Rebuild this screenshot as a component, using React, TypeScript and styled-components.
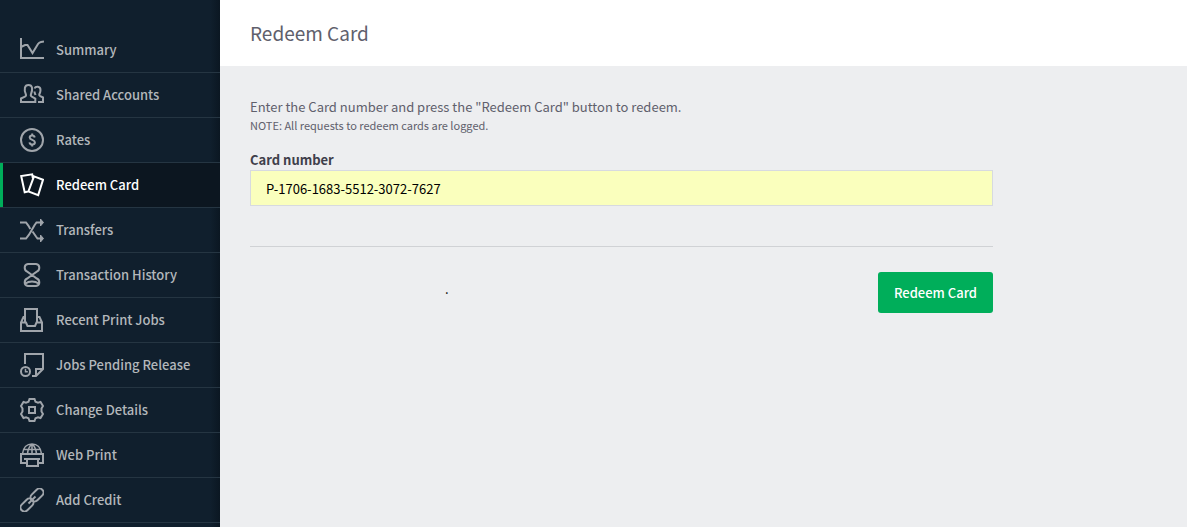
import React from "react";
import styled, { createGlobalStyle, css } from "styled-components";

const GlobalStyle = createGlobalStyle`
  * { box-sizing: border-box; }
  body {
    margin: 0;
    background: #edeef0;
    font-family: "Source Sans Pro", "Noto Sans CJK SC", sans-serif;
    font-size: 13px;
    line-height: 20px;
    color: #60606c;
  }
`;

const Layout = styled.div`
  display: flex;
  min-height: 100vh;
`;

const Sidebar = styled.nav`
  flex: 0 0 220px;
  height: 100vh;
  overflow: hidden;
  padding-top: 28px;
  background: linear-gradient(to left, #0b1722, #101f2d 10px);
`;

const Menu = styled.ul`
  list-style: none;
  margin: 0;
  padding: 0;
`;

const MenuItem = styled.li`
  border-bottom: 1px solid #253542;
`;

const MenuLink = styled.a<{ $active?: boolean }>`
  display: flex;
  align-items: center;
  gap: 12px;
  height: 44px;
  padding-left: 20px;
  color: #b3b7bb;
  font-weight: 500;
  text-decoration: none;
  ${(p) =>
    p.$active &&
    css`
      color: #fff;
      background: #0c1620;
      box-shadow: inset 3px 0 #00ae5a;
    `}
`;

const Icon = styled.svg<{ $active?: boolean }>`
  flex: none;
  width: 24px;
  height: 24px;
  fill: none;
  stroke: ${(p) => (p.$active ? "#fff" : "#a0a5ab")};
  stroke-width: 2;
`;

const Main = styled.main`
  flex: 1;
  min-width: 0;
`;

const Header = styled.header`
  display: flex;
  align-items: center;
  height: 66px;
  padding: 0 30px;
  background: #fff;
`;

const Title = styled.h1`
  margin: 0;
  font-size: 19px;
  font-weight: 400;
  line-height: 28px;
`;

const Form = styled.form`
  max-width: 803px;
  padding: 30px;
`;

const Intro = styled.p`
  margin: 0;
  line-height: 22px;
`;

const Note = styled.p`
  margin: 0 0 18px;
  font-size: 11px;
  line-height: 14px;
`;

const Label = styled.label`
  display: block;
  color: #3f3f4b;
  font-weight: 700;
`;

const CardInput = styled.input`
  display: block;
  width: 100%;
  height: 36px;
  padding: 0 15px;
  border: 1px solid #d7dae0;
  border-radius: 0;
  background: #faffbd;
  color: #000;
  font: inherit;
`;

const Divider = styled.hr`
  margin: 40px 0 25px;
  border: 0;
  border-top: 1px solid #d0d2d5;
`;

const Actions = styled.div`
  display: flex;
  align-items: flex-start;
  justify-content: space-between;
  padding-left: 195px;
`;

const Mark = styled.span`
  color: #000;
  line-height: 34px;
`;

const SubmitButton = styled.button`
  height: 41px;
  padding: 0 16px;
  border: 0;
  border-radius: 3px;
  background: #00ae5a;
  color: #fff;
  font: inherit;
  font-weight: 500;
`;

const items: { label: string; active?: boolean; icon: React.ReactNode }[] = [
  {
    label: "Summary",
    icon: <path d="M1 0v20h23M1 9l4-2h2.500l5 8 5.500-9q1-1.500 3-2l3-.5" />,
  },
  {
    label: "Shared Accounts",
    icon: (
      <path d="M1 19v-3.500l4-1.800q1.500-.7.800-2.500C3.800 6 4.500 2 8.500 2s4.500 4 2.500 9.200q-.7 1.800.8 2.500l3.500 1.800V19zM14.500 5.500c1-2.500 6-2.700 6 1.500 0 2-.6 3-1 4-.5 1-.3 1.700.8 2.200l2.700 1.300V19h-5M14.500 8.500c0 1.500.7 2.500 1 3.500" />
    ),
  },
  {
    label: "Rates",
    icon: (
      <>
        <circle cx="12" cy="12" r="11" />
        <path d="M14.700 9.500c-.3-1.500-1.300-2-2.500-2s-2.500.7-2.500 2c0 2.900 5.200 1.900 5.200 4.800 0 1.500-1.200 2.200-2.700 2.200s-2.500-.7-2.700-2.200M12.200 5.500v2M12.200 16.500v2" />
      </>
    ),
  },
  {
    label: "Redeem Card",
    active: true,
    icon: <path d="M12.800 5L12.200 1.300 1.200 3l3.500 16.200L8 18.500M14 3.400l9 3.400-4.800 15.300-9.800-3.600z" />,
  },
  {
    label: "Transfers",
    icon: (
      <>
        <path d="M0 4.500h6l2.500 3.300 1.800 3.200M0 20.500h6l3-3.800 5.500-9.500 2-2.700H22M12.500 13.500l3.500 5 1.500 2H22" />
        <path strokeWidth="1" fill="#a0a5ab" d="M20.500 1l3 3.500-3 3.500zM20.500 17l3 3.500-3 3.500z" />
      </>
    ),
  },
  {
    label: "Transaction History",
    icon: <path d="M8 1h8q3.300.5 3.300 3.700 0 2.800-2.500 4L12 12l-4.800 3.500q-2.500 1-2.500 4Q4.700 22.500 8 23h8q3.300-.5 3.300-3.500 0-3-2.500-4L12 12 7.200 8.700q-2.500-1.200-2.500-4Q4.700 1.500 8 1zM5.500 20.500q2.500-2 6.500-2t6.500 2" />,
  },
  {
    label: "Recent Print Jobs",
    icon: <path d="M5 14V1h12v13M5 9H3.500L1 14.500V23h21v-8.500L19.500 9H17M1 14.500h5L7.500 18h7.500l1.500-3.500H22" />,
  },
  {
    label: "Jobs Pending Release",
    icon: (
      <>
        <path d="M5 11V1h18v15l-7 7h-4M16 22.500V16h7" />
        <circle cx="5.500" cy="18.500" r="4.500" />
        <path strokeWidth="1.500" d="M5.500 15.800v3h2.300" />
      </>
    ),
  },
  {
    label: "Change Details",
    icon: (
      <>
        <path d="M9.500 1h5l1 2.800 2.500.8 2.500-.6 2.500 4-1.500 2.500v3l1.500 2.500-2.500 4-2.500-.6-2.500.8-1 2.800h-5l-1-2.800-2.500-.8-2.500.6-2.500-4 1.500-2.500v-3L1 8l2.500-4 2.500.6 2.500-.8z" />
        <path d="M9 9h6v6H9z" />
      </>
    ),
  },
  {
    label: "Web Print",
    icon: (
      <>
        <path d="M6 20H1v-9h22v9h-5M7 16v7h11v-7M4 16h16" />
        <path strokeWidth="1.600" d="M2.500 11C3 4.500 7 1 12 1s9 3.500 9.500 10M4 6.500h16M12 1v10M12 1Q8 4.500 7.500 11M12 1q4 3.500 4.500 10" />
      </>
    ),
  },
  {
    label: "Add Credit",
    icon: (
      <>
        <rect x="9.500" y="3" width="15" height="8" rx="4" transform="rotate(-45 17 7)" />
        <rect x="-.5" y="13" width="15" height="8" rx="4" transform="rotate(-45 7 17)" />
        <path d="M8.500 15.500l7-7" />
      </>
    ),
  },
];

export default function App() {
  return (
    <>
      <GlobalStyle />
      <Layout>
        <Sidebar>
          <Menu>
            {items.map(({ label, active, icon }) => (
              <MenuItem key={label}>
                <MenuLink href="#" $active={active} aria-current={active ? "page" : undefined}>
                  <Icon viewBox="0 0 24 24" $active={active} aria-hidden="true">
                    {icon}
                  </Icon>
                  {label}
                </MenuLink>
              </MenuItem>
            ))}
          </Menu>
        </Sidebar>
        <Main>
          <Header>
            <Title>Redeem Card</Title>
          </Header>
          <Form onSubmit={(e) => e.preventDefault()}>
            <Intro>Enter the Card number and press the "Redeem Card" button to redeem.</Intro>
            <Note>NOTE: All requests to redeem cards are logged.</Note>
            <Label htmlFor="card-number">Card number</Label>
            <CardInput id="card-number" type="text" defaultValue="P-1706-1683-5512-3072-7627" />
            <Divider />
            <Actions>
              <Mark>.</Mark>
              <SubmitButton type="submit">Redeem Card</SubmitButton>
            </Actions>
          </Form>
        </Main>
      </Layout>
    </>
  );
}
